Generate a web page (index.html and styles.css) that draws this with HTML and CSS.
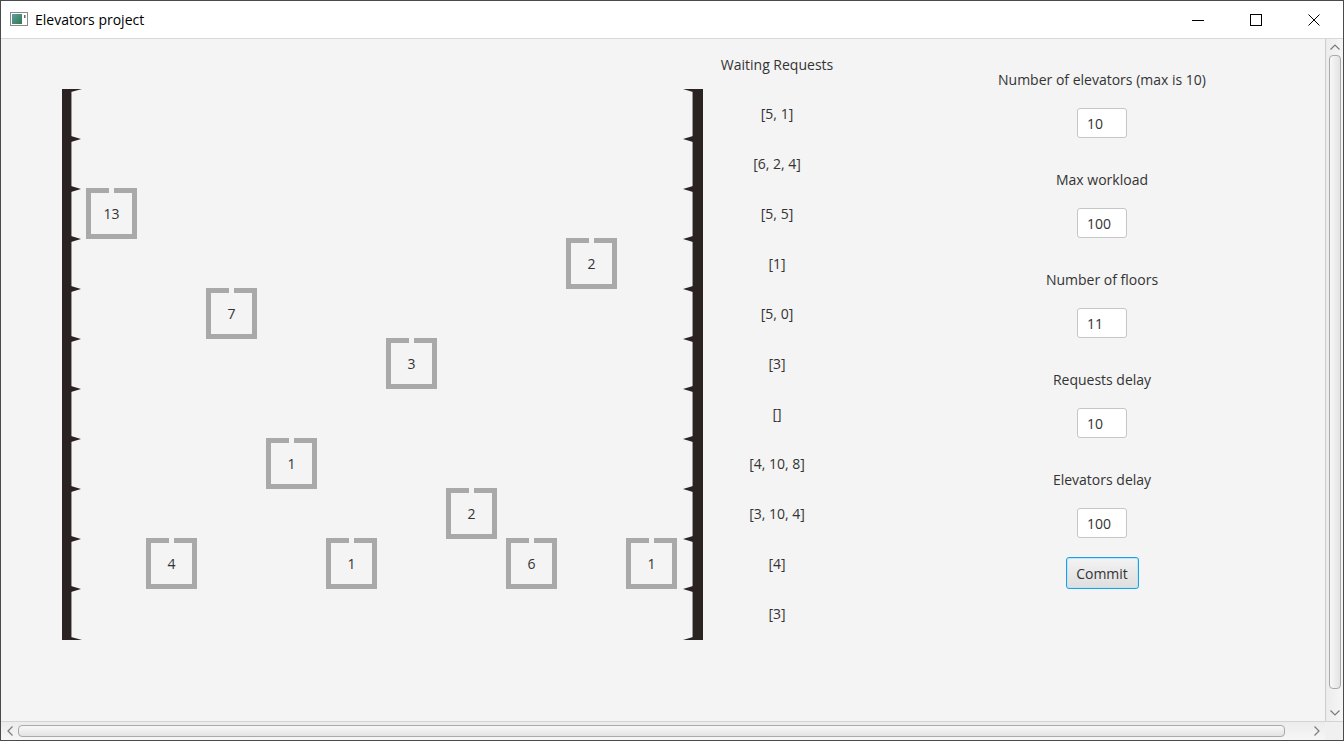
FILE: index.html
```html
<!DOCTYPE html>
<html>
<head>
<meta charset="utf-8">
<title>Elevators project</title>
<link rel="stylesheet" href="styles.css">
</head>
<body>
<div class="window">
  <div class="titlebar">
    <svg class="app-icon" width="18" height="14" viewBox="0 0 18 14">
      <defs>
        <linearGradient id="ig" x1="0" y1="0" x2="1" y2="1">
          <stop offset="0" stop-color="#5f9ea8"/>
          <stop offset="1" stop-color="#2f7a4a"/>
        </linearGradient>
      </defs>
      <rect x="0.5" y="0.5" width="17" height="13" fill="#fff" stroke="#8a8a8a"/>
      <rect x="2" y="2" width="10" height="10" fill="url(#ig)"/>
      <rect x="14" y="3" width="1.5" height="3" fill="#6a6a6a"/>
    </svg>
    <span class="title">Elevators project</span>
    <div class="controls">
      <div class="ctl"><svg width="12" height="12" viewBox="0 0 12 12"><line x1="0" y1="6.5" x2="12" y2="6.5" stroke="#000" stroke-width="1"/></svg></div>
      <div class="ctl"><svg width="12" height="12" viewBox="0 0 12 12"><rect x="0.5" y="0.5" width="11" height="11" fill="none" stroke="#000" stroke-width="1"/></svg></div>
      <div class="ctl"><svg width="12" height="12" viewBox="0 0 12 12"><path d="M0.5 0.5 L11.5 11.5 M11.5 0.5 L0.5 11.5" stroke="#000" stroke-width="1"/></svg></div>
    </div>
  </div>
  <div class="main">
    <div class="content">
      <div class="shaft">
        <svg class="rail" width="20" height="551" viewBox="0 0 20 551">
          <rect x="0" y="0" width="9" height="551" fill="#2b2321"/>
          <rect x="9" y="3" width="1" height="545" fill="#9c9896"/>
          <polygon points="9,0 20,0 9,3" fill="#2b2321"/>
          <polygon points="9,47 19,50 9,53" fill="#2b2321"/>
          <polygon points="9,97 19,100 9,103" fill="#2b2321"/>
          <polygon points="9,147 19,150 9,153" fill="#2b2321"/>
          <polygon points="9,197 19,200 9,203" fill="#2b2321"/>
          <polygon points="9,247 19,250 9,253" fill="#2b2321"/>
          <polygon points="9,297 19,300 9,303" fill="#2b2321"/>
          <polygon points="9,347 19,350 9,353" fill="#2b2321"/>
          <polygon points="9,397 19,400 9,403" fill="#2b2321"/>
          <polygon points="9,447 19,450 9,453" fill="#2b2321"/>
          <polygon points="9,497 19,500 9,503" fill="#2b2321"/>
          <polygon points="9,551 20,551 9,548" fill="#2b2321"/>
        </svg>
        <div class="floors">
          <div class="car" style="grid-area: 3 / 1"><span>13</span></div>
          <div class="car" style="grid-area: 10 / 2"><span>4</span></div>
          <div class="car" style="grid-area: 5 / 3"><span>7</span></div>
          <div class="car" style="grid-area: 8 / 4"><span>1</span></div>
          <div class="car" style="grid-area: 10 / 5"><span>1</span></div>
          <div class="car" style="grid-area: 6 / 6"><span>3</span></div>
          <div class="car" style="grid-area: 9 / 7"><span>2</span></div>
          <div class="car" style="grid-area: 10 / 8"><span>6</span></div>
          <div class="car" style="grid-area: 4 / 9"><span>2</span></div>
          <div class="car" style="grid-area: 10 / 10"><span>1</span></div>
        </div>
        <svg class="rail rail-right" width="20" height="551" viewBox="0 0 20 551">
          <rect x="10" y="0" width="10" height="551" fill="#2b2321"/>
          <rect x="9" y="3" width="1" height="545" fill="#9c9896"/>
          <polygon points="10,0 0,0 10,3" fill="#2b2321"/>
          <polygon points="10,47 0,50 10,53" fill="#2b2321"/>
          <polygon points="10,97 0,100 10,103" fill="#2b2321"/>
          <polygon points="10,147 0,150 10,153" fill="#2b2321"/>
          <polygon points="10,197 0,200 10,203" fill="#2b2321"/>
          <polygon points="10,247 0,250 10,253" fill="#2b2321"/>
          <polygon points="10,297 0,300 10,303" fill="#2b2321"/>
          <polygon points="10,347 0,350 10,353" fill="#2b2321"/>
          <polygon points="10,397 0,400 10,403" fill="#2b2321"/>
          <polygon points="10,447 0,450 10,453" fill="#2b2321"/>
          <polygon points="10,497 0,500 10,503" fill="#2b2321"/>
          <polygon points="10,551 0,551 10,548" fill="#2b2321"/>
        </svg>
      </div>
      <div class="waiting">
        <div class="waiting-head">Waiting Requests</div>
        <div class="req">[5, 1]</div>
        <div class="req">[6, 2, 4]</div>
        <div class="req">[5, 5]</div>
        <div class="req">[1]</div>
        <div class="req">[5, 0]</div>
        <div class="req">[3]</div>
        <div class="req">[]</div>
        <div class="req">[4, 10, 8]</div>
        <div class="req">[3, 10, 4]</div>
        <div class="req">[4]</div>
        <div class="req">[3]</div>
      </div>
      <div class="panel">
        <div class="field">
          <div class="label">Number of elevators (max is 10)</div>
          <input class="num" type="text" value="10">
        </div>
        <div class="field">
          <div class="label">Max workload</div>
          <input class="num" type="text" value="100">
        </div>
        <div class="field">
          <div class="label">Number of floors</div>
          <input class="num" type="text" value="11">
        </div>
        <div class="field">
          <div class="label">Requests delay</div>
          <input class="num" type="text" value="10">
        </div>
        <div class="field last">
          <div class="label">Elevators delay</div>
          <input class="num" type="text" value="100">
        </div>
        <button class="commit">Commit</button>
      </div>
    </div>
    <div class="vscroll">
      <div class="arrow"><svg width="10" height="6" viewBox="0 0 10 6"><path d="M0.5 5.5 L5 1 L9.5 5.5" fill="none" stroke="#7a7a7a" stroke-width="1.2"/></svg></div>
      <div class="vthumb"></div>
      <div class="arrow"><svg width="10" height="6" viewBox="0 0 10 6"><path d="M0.5 0.5 L5 5 L9.5 0.5" fill="none" stroke="#7a7a7a" stroke-width="1.2"/></svg></div>
    </div>
  </div>
  <div class="hscroll">
    <div class="harrow"><svg width="6" height="10" viewBox="0 0 6 10"><path d="M5.5 0.5 L1 5 L5.5 9.5" fill="none" stroke="#7a7a7a" stroke-width="1.2"/></svg></div>
    <div class="htrack"><div class="hthumb"></div></div>
    <div class="harrow"><svg width="6" height="10" viewBox="0 0 6 10"><path d="M0.5 0.5 L5 5 L0.5 9.5" fill="none" stroke="#7a7a7a" stroke-width="1.2"/></svg></div>
    <div class="corner"></div>
  </div>
</div>
</body>
</html>
```
FILE: styles.css
```css
html, body {
  margin: 0;
  padding: 0;
  background: #ffffff;
}

body {
  font-family: "Open Sans", "Noto Sans", "Liberation Sans", sans-serif;
  color: #333333;
}

.window {
  width: 1344px;
  height: 741px;
  box-sizing: border-box;
  border: 1px solid #4a4a4a;
  display: flex;
  flex-direction: column;
  background: #f4f4f4;
  overflow: hidden;
}

/* title bar */
.titlebar {
  flex: none;
  height: 37px;
  background: #ffffff;
  border-bottom: 1px solid #d8d8d8;
  display: flex;
  align-items: center;
}

.app-icon {
  margin-left: 9px;
  margin-top: -1px;
}

.title {
  margin-left: 7px;
  font-size: 14px;
  color: #000000;
}

.controls {
  margin-left: auto;
  display: flex;
  height: 100%;
}

.ctl {
  width: 58px;
  height: 100%;
  display: flex;
  align-items: center;
  justify-content: center;
}

.ctl svg {
  display: block;
}

/* main */
.main {
  flex: 1;
  min-height: 0;
  display: flex;
}

.content {
  flex: 1;
  min-width: 0;
  display: flex;
  align-items: flex-start;
  padding-left: 61px;
  font-size: 14px;
}

.shaft {
  margin-top: 50px;
  display: flex;
  align-items: flex-start;
}

.rail {
  display: block;
}

.floors {
  margin: -1px 6px 0 4px;
  display: grid;
  grid-template-columns: repeat(10, 51px);
  grid-template-rows: repeat(11, 50px);
  column-gap: 9px;
}

.car {
  position: relative;
  width: 51px;
  height: 51px;
  box-sizing: border-box;
  border: 5px solid #a9a9a9;
  display: flex;
  align-items: center;
  justify-content: center;
  font-size: 14px;
  color: #333333;
}

.car::before {
  content: "";
  position: absolute;
  top: -5px;
  left: 18px;
  width: 5px;
  height: 5px;
  background: #f4f4f4;
}

.waiting {
  width: 148px;
  display: flex;
  flex-direction: column;
  align-items: center;
}

.waiting-head {
  height: 50px;
  line-height: 51px;
}

.req {
  height: 50px;
  line-height: 50px;
}

.panel {
  margin-left: 101px;
  width: 300px;
  padding-top: 31px;
  display: flex;
  flex-direction: column;
  align-items: center;
}

.field {
  display: flex;
  flex-direction: column;
  align-items: center;
  margin-bottom: 32px;
}

.field.last {
  margin-bottom: 19px;
}

.label {
  height: 20px;
  line-height: 20px;
  margin-bottom: 18px;
  white-space: nowrap;
}

.num {
  width: 50px;
  height: 30px;
  box-sizing: border-box;
  border: 1px solid #c6c6c6;
  border-radius: 3px;
  background: #ffffff;
  padding: 0 0 0 9px;
  margin: 0;
  font-family: inherit;
  font-size: 14px;
  color: #333333;
  outline: none;
}

.commit {
  width: 73px;
  height: 32px;
  box-sizing: border-box;
  border: 1px solid #1ba1e2;
  border-radius: 3px;
  background: linear-gradient(#f3f3f3, #dedede);
  box-shadow: inset 0 0 0 1px #bfe6f7;
  font-family: inherit;
  font-size: 14px;
  color: #333333;
  padding: 0;
}

/* scrollbars */
.vscroll {
  flex: none;
  width: 17px;
  border-left: 1px solid #cdcdcd;
  background: linear-gradient(to right, #ececec, #f6f6f6);
  display: flex;
  flex-direction: column;
  align-items: center;
}

.arrow {
  height: 16px;
  width: 100%;
  display: flex;
  align-items: center;
  justify-content: center;
  flex: none;
}

.vthumb {
  width: 12px;
  flex: 1;
  margin: 0 0 16px 0;
  box-sizing: border-box;
  border: 1px solid #a9a9a9;
  border-radius: 4px;
  background: linear-gradient(to right, #f8f8f8, #e3e3e3);
}

.hscroll {
  flex: none;
  height: 18px;
  display: flex;
  border-top: 1px solid #d4d4d4;
  background: linear-gradient(#ececec, #f6f6f6);
}

.harrow {
  width: 17px;
  flex: none;
  display: flex;
  align-items: center;
  justify-content: center;
}

.htrack {
  flex: 1;
  display: flex;
  align-items: center;
  padding-right: 15px;
}

.hthumb {
  width: 1267px;
  height: 12px;
  box-sizing: border-box;
  border: 1px solid #a9a9a9;
  border-radius: 4px;
  background: linear-gradient(#f8f8f8, #e3e3e3);
}

.corner {
  width: 18px;
  flex: none;
  background: #f0f0f0;
}
```
